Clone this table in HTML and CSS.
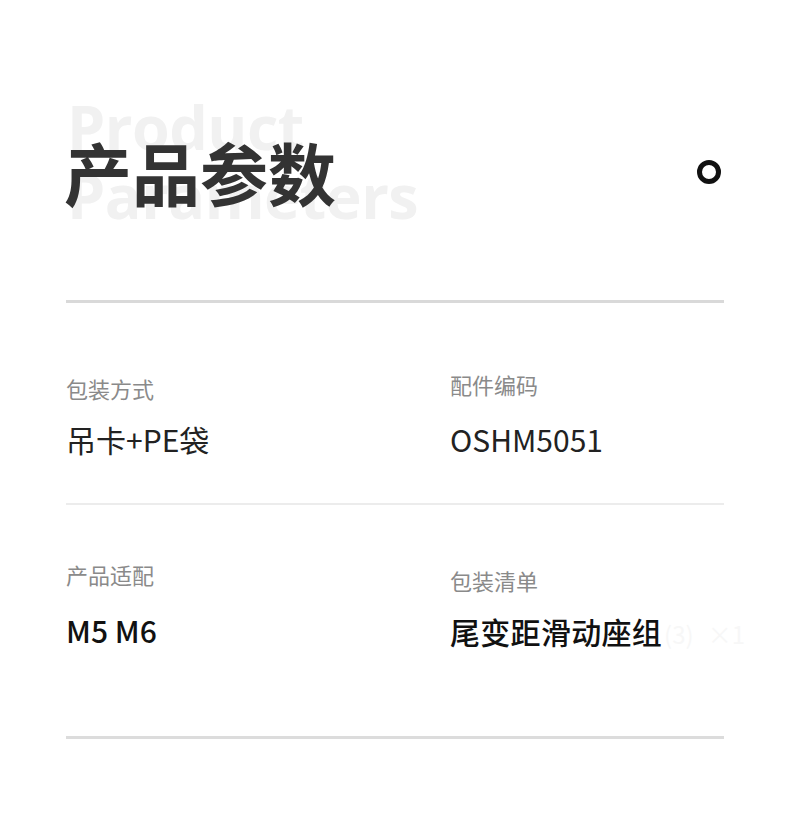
FILE: index.html
```html
<!DOCTYPE html>
<html lang="zh-CN">
<head>
    <meta charset="UTF-8">
    <meta name="viewport" content="width=device-width, initial-scale=1.0">
    <link rel="stylesheet" href="styles.css">
</head>
<body>
    <div class="page">
        <div class="title-block">
            <div class="title-bg" aria-hidden="true">Product<br>Parameters</div>
            <h1 class="title">产品参数</h1>
            <span class="ring"></span>
        </div>

        <hr class="rule rule-top">

        <div class="params row-one">
            <div class="param">
                <p class="label">包装方式</p>
                <p class="value">吊卡+PE袋</p>
            </div>
            <div class="param label-up">
                <p class="label">配件编码</p>
                <p class="value">OSHM5051</p>
            </div>
        </div>

        <hr class="rule rule-mid">

        <div class="params row-two">
            <div class="param">
                <p class="label">产品适配</p>
                <p class="value strong">M5 M6</p>
            </div>
            <div class="param label-down">
                <p class="label">包装清单</p>
                <p class="value strong">尾变距滑动座组<span class="ghost">(3)<span class="qty">×1</span></span></p>
            </div>
        </div>

        <hr class="rule rule-bottom">
    </div>
</body>
</html>
```

FILE: styles.css
```css
body {
    margin: 0;
    background: #fff;
    font-family: "Noto Sans CJK SC", "Noto Sans", sans-serif;
    color: #222;
}

.page {
    width: 658px;
    margin: 0 auto;
    padding-top: 98px;
}

.title-block {
    position: relative;
    height: 170px;
    display: flex;
    justify-content: space-between;
    align-items: flex-start;
}

/* watermark behind the heading */
.title-bg {
    position: absolute;
    left: 1px;
    top: -6px;
    font-family: "Open Sans", sans-serif;
    font-weight: 700;
    font-size: 61px;
    line-height: 69px;
    color: #f1f1f1;
    letter-spacing: -0.5px;
}

.title {
    position: relative;
    margin: 34px 0 0 -2px;
    font-size: 68px;
    font-weight: 700;
    line-height: 80px;
    color: #333;
}

.ring {
    width: 14px;
    height: 14px;
    border: 5px solid #111;
    border-radius: 50%;
    margin-top: 62px;
    margin-right: 3px;
}

.rule {
    border: none;
    margin: 0;
}

.rule-top {
    height: 3px;
    background: #d9d9d9;
    margin-top: 32px;
}

.rule-mid {
    height: 2px;
    background: #ececec;
}

.rule-bottom {
    height: 3px;
    background: #dcdcdc;
}

.params {
    display: grid;
    grid-template-columns: 384px 1fr;
}

.row-one {
    height: 200px;
}

.row-two {
    height: 231px;
}

.row-one .param {
    padding-top: 70px;
}

.row-two .param {
    padding-top: 54px;
}

.label {
    margin: 0;
    font-size: 22px;
    line-height: 30px;
    color: #8a8a8a;
}

.value {
    margin: 18px 0 0;
    font-size: 30px;
    line-height: 36px;
    color: #222;
    white-space: nowrap;
}

.label-up .label {
    margin-top: -4px;
}

.label-up .value {
    margin-top: 22px;
}

.label-down .label {
    margin-top: 6px;
}

.row-two .value {
    margin-top: 23px;
}

.row-two .label-down .value {
    margin-top: 18px;
    letter-spacing: 0.3px;
}

.value.strong {
    font-weight: 500;
    color: #111;
}

.ghost {
    margin-left: 2px;
    color: #f7f7f7;
    font-weight: 400;
    font-size: 24px;
    letter-spacing: 0;
}

.ghost .qty {
    margin-left: 14px;
}
```
